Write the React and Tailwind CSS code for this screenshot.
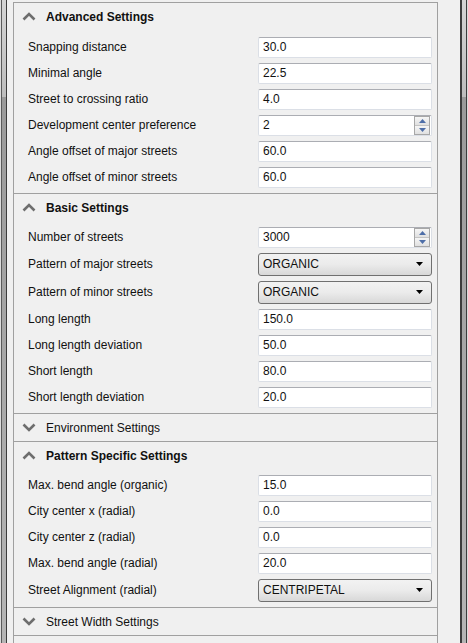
import React from "react";

const FONT = { fontFamily: '"Liberation Sans", Arial, sans-serif' };

// Collapsible property panel (Windows-ish look): sections with a chevron header
// and label / editor rows underneath.
const SECTIONS = [
    {
        title: "Advanced Settings",
        open: true,
        pad: "pt-[4px] pb-[3px]",
        rows: [
            { label: "Snapping distance", value: "30.0" },
            { label: "Minimal angle", value: "22.5" },
            { label: "Street to crossing ratio", value: "4.0" },
            { label: "Development center preference", value: "2", type: "spin" },
            { label: "Angle offset of major streets", value: "60.0" },
            { label: "Angle offset of minor streets", value: "60.0" },
        ],
    },
    {
        title: "Basic Settings",
        open: true,
        pad: "pt-[3px] pb-[3px]",
        rows: [
            { label: "Number of streets", value: "3000", type: "spin" },
            { label: "Pattern of major streets", value: "ORGANIC", type: "combo" },
            { label: "Pattern of minor streets", value: "ORGANIC", type: "combo" },
            { label: "Long length", value: "150.0" },
            { label: "Long length deviation", value: "50.0" },
            { label: "Short length", value: "80.0" },
            { label: "Short length deviation", value: "20.0" },
        ],
    },
    { title: "Environment Settings", open: false },
    {
        title: "Pattern Specific Settings",
        open: true,
        pad: "pt-[3px] pb-[3px]",
        rows: [
            { label: "Max. bend angle (organic)", value: "15.0" },
            { label: "City center x (radial)", value: "0.0" },
            { label: "City center z (radial)", value: "0.0" },
            { label: "Max. bend angle (radial)", value: "20.0" },
            { label: "Street Alignment (radial)", value: "CENTRIPETAL", type: "combo" },
        ],
    },
    { title: "Street Width Settings", open: false },
];

export default function App() {
    return (
        <div className="flex h-[643px] w-[468px] overflow-hidden bg-[#f0f0f0] text-[12px] text-[#111]" style={FONT}>
            <EdgeBar side="left" />
            <div className="mt-[2px] w-[425px] shrink-0 border-x border-t border-[#a0a0a0] bg-[#f0f0f0]">
                {SECTIONS.map((s) => (
                    <Section key={s.title} section={s} />
                ))}
                <div className="h-[28px]" />
            </div>
            <div className="flex-1" />
            <EdgeBar side="right" />
        </div>
    );
}

function EdgeBar({ side }) {
    const left = side === "left";
    return (
        <div className={`flex h-full shrink-0 ${left ? "w-[13px]" : "w-[8px]"}`}>
            <div className={`${left ? "w-[1px] bg-[#dcdcdc]" : "w-[2px] bg-[#3c3c3c]"}`} />
            {left && <div className="w-[1px] bg-[#5a5a5a]" />}
            <div className="flex w-[4px] flex-col">
                <div className="h-[97px] bg-gradient-to-b from-[#d4d4d4] to-[#bdbdbd]" />
                <div className="flex-1 bg-gradient-to-b from-[#9a9a9a] to-[#b5b5b5]" />
            </div>
            <div className="w-[1px] bg-[#3c3c3c]" />
            {left ? <div className="w-[6px] bg-[#f0f0f0]" /> : <div className="w-[1px] bg-[#dcdcdc]" />}
        </div>
    );
}

function Section({ section }) {
    return (
        <div className="border-b border-[#a0a0a0]">
            <div className="flex h-[27px] items-center pl-[8px]">
                <Chevron up={section.open} />
                <span className={`ml-[10px] ${section.open ? "font-bold" : ""}`}>{section.title}</span>
            </div>
            {section.open && (
                <div className={`flex flex-col ${section.pad}`}>
                    {section.rows.map((r, i) => (
                        <Row key={i} row={r} />
                    ))}
                </div>
            )}
        </div>
    );
}

function Chevron({ up }) {
    return (
        <svg width="14" height="9" viewBox="0 0 14 9" className="shrink-0">
            <polyline
                points={up ? "1.5,7.5 7,2 12.5,7.5" : "1.5,1.5 7,7 12.5,1.5"}
                fill="none"
                stroke="#6e6e6e"
                strokeWidth="2.6"
            />
        </svg>
    );
}

function Row({ row }) {
    const combo = row.type === "combo";
    return (
        <div className={`flex items-center justify-between pl-[14px] pr-[5px] ${combo ? "h-[28px]" : "h-[26px]"}`}>
            <span>{row.label}</span>
            {combo ? <Combo value={row.value} /> : <TextBox value={row.value} spin={row.type === "spin"} />}
        </div>
    );
}

function TextBox({ value, spin }) {
    return (
        <div className="flex h-[21px] w-[174px] items-center rounded-[2px] border border-[#dbdfe6] border-t-[#abadb3] bg-white pl-[4px] pr-[1px]">
            <span className="flex-1">{value}</span>
            {spin && (
                <div className="flex h-[19px] w-[16px] flex-col border border-[#a7a7a7]">
                    <SpinButton up />
                    <SpinButton />
                </div>
            )}
        </div>
    );
}

function SpinButton({ up }) {
    return (
        <div className={`flex flex-1 items-center justify-center bg-gradient-to-b from-[#f6f6f6] to-[#e0e0e0] ${up ? "border-b border-[#c4c4c4]" : ""}`}>
            <svg width="7" height="4" viewBox="0 0 7 4">
                <polygon points={up ? "0,4 3.5,0 7,4" : "0,0 3.5,4 7,0"} fill="#4e6ea8" />
            </svg>
        </div>
    );
}

function Combo({ value }) {
    return (
        <div className="flex h-[23px] w-[174px] items-center rounded-[3px] border border-[#707070] bg-gradient-to-b from-[#f2f2f2] via-[#ebebeb] to-[#d8d8d8] pl-[4px] pr-[8px]">
            <span className="flex-1">{value}</span>
            <svg width="7" height="4" viewBox="0 0 7 4">
                <polygon points="0,0 3.5,4 7,0" fill="#000" />
            </svg>
        </div>
    );
}
